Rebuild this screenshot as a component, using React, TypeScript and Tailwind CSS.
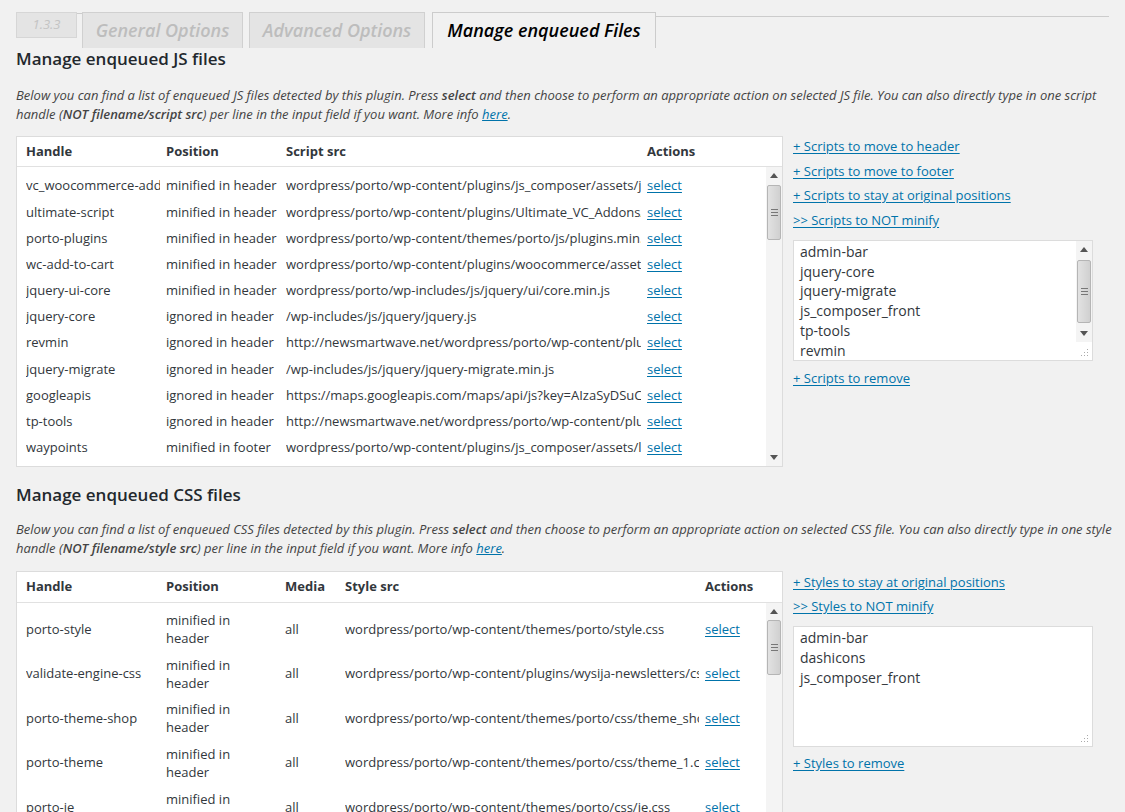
import React from "react";

type JsRow = { handle: string; position: string; src: string };
type CssRow = { handle: string; position: string; media: string; src: string };

const JS_ROWS: JsRow[] = [
  { handle: "vc_woocommerce-add-to-cart-js", position: "minified in header", src: "wordpress/porto/wp-content/plugins/js_composer/assets/js/vendors/woocommerce-add-to-cart.js" },
  { handle: "ultimate-script", position: "minified in header", src: "wordpress/porto/wp-content/plugins/Ultimate_VC_Addons/assets/min-js/ultimate.min.js" },
  { handle: "porto-plugins", position: "minified in header", src: "wordpress/porto/wp-content/themes/porto/js/plugins.min.js" },
  { handle: "wc-add-to-cart", position: "minified in header", src: "wordpress/porto/wp-content/plugins/woocommerce/assets/js/frontend/add-to-cart.min.js" },
  { handle: "jquery-ui-core", position: "minified in header", src: "wordpress/porto/wp-includes/js/jquery/ui/core.min.js" },
  { handle: "jquery-core", position: "ignored in header", src: "/wp-includes/js/jquery/jquery.js" },
  { handle: "revmin", position: "ignored in header", src: "http://newsmartwave.net/wordpress/porto/wp-content/plugins/revslider/rs-plugin/js/jquery.themepunch.revolution.min.js" },
  { handle: "jquery-migrate", position: "ignored in header", src: "/wp-includes/js/jquery/jquery-migrate.min.js" },
  { handle: "googleapis", position: "ignored in header", src: "https://maps.googleapis.com/maps/api/js?key=AIzaSyDSuCh" },
  { handle: "tp-tools", position: "ignored in header", src: "http://newsmartwave.net/wordpress/porto/wp-content/plugins/revslider/rs-plugin/js/jquery.themepunch.tools.min.js" },
  { handle: "waypoints", position: "minified in footer", src: "wordpress/porto/wp-content/plugins/js_composer/assets/lib/waypoints/waypoints.min.js" },
];

const CSS_ROWS: CssRow[] = [
  { handle: "porto-style", position: "minified in header", media: "all", src: "wordpress/porto/wp-content/themes/porto/style.css" },
  { handle: "validate-engine-css", position: "minified in header", media: "all", src: "wordpress/porto/wp-content/plugins/wysija-newsletters/css/validationEngine.jquery.css" },
  { handle: "porto-theme-shop", position: "minified in header", media: "all", src: "wordpress/porto/wp-content/themes/porto/css/theme_shop_1.css" },
  { handle: "porto-theme", position: "minified in header", media: "all", src: "wordpress/porto/wp-content/themes/porto/css/theme_1.css" },
  { handle: "porto-ie", position: "minified in header", media: "all", src: "wordpress/porto/wp-content/themes/porto/css/ie.css" },
];

const JS_LIST = ["admin-bar", "jquery-core", "jquery-migrate", "js_composer_front", "tp-tools", "revmin"];
const CSS_LIST = ["admin-bar", "dashicons", "js_composer_front"];

function Scrollbar({ thumbTop, thumbH }: { thumbTop: number; thumbH: number }) {
  // fake windows-style scrollbar
  return (
    <div className="relative w-[16px] shrink-0 self-stretch bg-[#f4f4f4]">
      <svg className="absolute left-[4px] top-[6px]" width="8" height="5" viewBox="0 0 8 5">
        <path d="M4 0 L8 5 L0 5 Z" fill="#555" />
      </svg>
      <div
        className="absolute left-[1px] right-[1px] flex items-center justify-center rounded-[2px] border border-[#b5b5b5] bg-gradient-to-r from-[#e2e2e2] to-[#d0d0d0]"
        style={{ top: thumbTop, height: thumbH }}
      >
        <div className="flex flex-col gap-[2px]">
          <div className="h-px w-[7px] bg-[#777]" />
          <div className="h-px w-[7px] bg-[#777]" />
          <div className="h-px w-[7px] bg-[#777]" />
        </div>
      </div>
      <svg className="absolute bottom-[6px] left-[4px]" width="8" height="5" viewBox="0 0 8 5">
        <path d="M0 0 L8 0 L4 5 Z" fill="#555" />
      </svg>
    </div>
  );
}

function Grip() {
  return (
    <svg className="absolute bottom-[3px] right-[3px]" width="9" height="9" viewBox="0 0 9 9">
      <rect x="7" y="1" width="1" height="1" fill="#aaa" />
      <rect x="4" y="4" width="1" height="1" fill="#aaa" />
      <rect x="7" y="4" width="1" height="1" fill="#aaa" />
      <rect x="1" y="7" width="1" height="1" fill="#aaa" />
      <rect x="4" y="7" width="1" height="1" fill="#aaa" />
      <rect x="7" y="7" width="1" height="1" fill="#aaa" />
    </svg>
  );
}

function Link({ children }: { children: React.ReactNode }) {
  return <a className="text-[13px] leading-[18px] text-[#0073aa] underline underline-offset-2">{children}</a>;
}

function Description({ kind, word, className }: { kind: string; word: string; className: string }) {
  return (
    <p className={"w-[1100px] text-[13px] leading-[19px] italic text-[#444] " + className}>
      Below you can find a list of enqueued {kind} files detected by this plugin. Press <b className="font-semibold">select</b> and then choose to
      perform an appropriate action on selected {kind} file. You can also directly type in one {word} handle (
      <b className="font-semibold">NOT filename/{word} src</b>) per line in the input field if you want. More info{" "}
      <a className="text-[#0073aa] underline">here</a>.
    </p>
  );
}

export default function App() {
  return (
    <div className="min-h-[812px] bg-[#f1f1f1] font-['Open_Sans',sans-serif] text-[#444]">
      <div className="w-[1125px] pl-[16px] pt-[12px]">
        {/* tabs */}
        <div className="flex w-[1093px] items-start">
          <div className="flex h-[26px] w-[61px] items-center justify-center border border-[#d6d6d6] bg-[#e4e4e4] text-[13px] italic text-[#c3c3c3]">
            1.3.3
          </div>
          <div className="mt-[1px] h-px w-[5px] bg-[#ccc]" />
          <div className="flex h-[36px] w-[161px] items-center justify-center border border-b-0 border-[#d0d0d0] bg-[#e4e4e4] text-[18px] font-semibold italic text-[#bdbdbd]">
            General Options
          </div>
          <div className="w-[6px]" />
          <div className="flex h-[36px] w-[176px] items-center justify-center border border-b-0 border-[#d0d0d0] bg-[#e4e4e4] text-[18px] font-semibold italic text-[#bdbdbd]">
            Advanced Options
          </div>
          <div className="w-[7px]" />
          <div className="flex h-[36px] w-[224px] items-center justify-center border border-b-0 border-[#ccc] bg-[#f1f1f1] text-[18px] font-semibold italic text-[#000]">
            Manage enqueued Files
          </div>
          <div className="mt-[4px] flex-1 border-t border-[#ccc]" />
        </div>

        {/* JS section */}
        <h2 className="text-[17px] font-semibold leading-[22px] text-[#23282d]">Manage enqueued JS files</h2>
        <Description kind="JS" word="script" className="mt-[16px]" />

        <div className="mt-[12px] flex gap-[10px]">
          <div className="flex h-[331px] w-[767px] flex-col border border-[#dcdcdc] bg-white">
            <div className="flex h-[30px] shrink-0 items-center border-b border-[#e1e1e1] pl-[9px] text-[13px] font-bold text-[#32373c]">
              <div className="w-[140px]">Handle</div>
              <div className="w-[120px]">Position</div>
              <div className="w-[361px]">Script src</div>
              <div>Actions</div>
            </div>
            <div className="flex min-h-0 flex-1">
              <div className="flex-1 overflow-hidden pl-[9px] pt-[6px] text-[13px] text-[#32373c]">
                {JS_ROWS.map((r) => (
                  <div key={r.handle} className="flex h-[26.2px] items-center whitespace-nowrap">
                    <div className="mr-[6px] w-[134px] overflow-hidden">{r.handle}</div>
                    <div className="mr-[6px] w-[114px] overflow-hidden">{r.position}</div>
                    <div className="mr-[6px] w-[355px] overflow-hidden">{r.src}</div>
                    <a className="text-[#0073aa] underline underline-offset-2">select</a>
                  </div>
                ))}
              </div>
              <Scrollbar thumbTop={18} thumbH={55} />
            </div>
          </div>

          <div className="flex w-[300px] flex-col">
            <div className="mt-[1px] flex flex-col gap-[6.6px]">
              <Link>+ Scripts to move to header</Link>
              <Link>+ Scripts to move to footer</Link>
              <Link>+ Scripts to stay at original positions</Link>
              <Link>&gt;&gt; Scripts to NOT minify</Link>
            </div>
            <div className="relative mt-[11px] flex h-[121px] border border-[#dcdcdc] bg-white">
              <div className="flex-1 overflow-hidden pl-[6px] pt-[1px] text-[14px] leading-[19.8px] text-[#32373c]">
                {JS_LIST.map((s) => (
                  <div key={s}>{s}</div>
                ))}
              </div>
              <div className="flex w-[16px] flex-col">
                <div className="flex flex-1">
                  <Scrollbar thumbTop={19} thumbH={63} />
                </div>
                <div className="h-[18px] bg-white" />
              </div>
              <Grip />
            </div>
            <div className="mt-[4px]">
              <Link>+ Scripts to remove</Link>
            </div>
          </div>
        </div>

        {/* CSS section */}
        <h2 className="mt-[17px] text-[17px] font-semibold leading-[22px] text-[#23282d]">Manage enqueued CSS files</h2>
        <Description kind="CSS" word="style" className="mt-[14px]" />

        <div className="mt-[13px] flex gap-[10px]">
          <div className="flex h-[300px] w-[767px] flex-col border border-[#dcdcdc] bg-white">
            <div className="flex h-[31px] shrink-0 items-center border-b border-[#e1e1e1] pl-[9px] text-[13px] font-bold text-[#32373c]">
              <div className="w-[140px]">Handle</div>
              <div className="w-[119px]">Position</div>
              <div className="w-[60px]">Media</div>
              <div className="w-[360px]">Style src</div>
              <div>Actions</div>
            </div>
            <div className="flex min-h-0 flex-1">
              <div className="flex-1 overflow-hidden pl-[9px] pt-[4px] text-[13px] text-[#32373c]">
                {CSS_ROWS.map((r) => (
                  <div key={r.handle} className="flex h-[44.6px] items-center">
                    <div className="mr-[6px] w-[134px] overflow-hidden whitespace-nowrap">{r.handle}</div>
                    <div className="w-[119px] pr-[6px] leading-[18px]">
                      minified in
                      <br />
                      header
                    </div>
                    <div className="w-[60px]">{r.media}</div>
                    <div className="mr-[6px] w-[354px] overflow-hidden whitespace-nowrap">{r.src}</div>
                    <a className="text-[#0073aa] underline underline-offset-2">select</a>
                  </div>
                ))}
              </div>
              <Scrollbar thumbTop={17} thumbH={55} />
            </div>
          </div>

          <div className="flex w-[300px] flex-col">
            <div className="mt-[2px] flex flex-col gap-[6px]">
              <Link>+ Styles to stay at original positions</Link>
              <Link>&gt;&gt; Styles to NOT minify</Link>
            </div>
            <div className="relative mt-[11px] h-[121px] border border-[#dcdcdc] bg-white pl-[6px] pt-[1px] text-[14px] leading-[19.8px] text-[#32373c]">
              {CSS_LIST.map((s) => (
                <div key={s}>{s}</div>
              ))}
              <Grip />
            </div>
            <div className="mt-[3px]">
              <Link>+ Styles to remove</Link>
            </div>
          </div>
        </div>
      </div>
    </div>
  );
}
